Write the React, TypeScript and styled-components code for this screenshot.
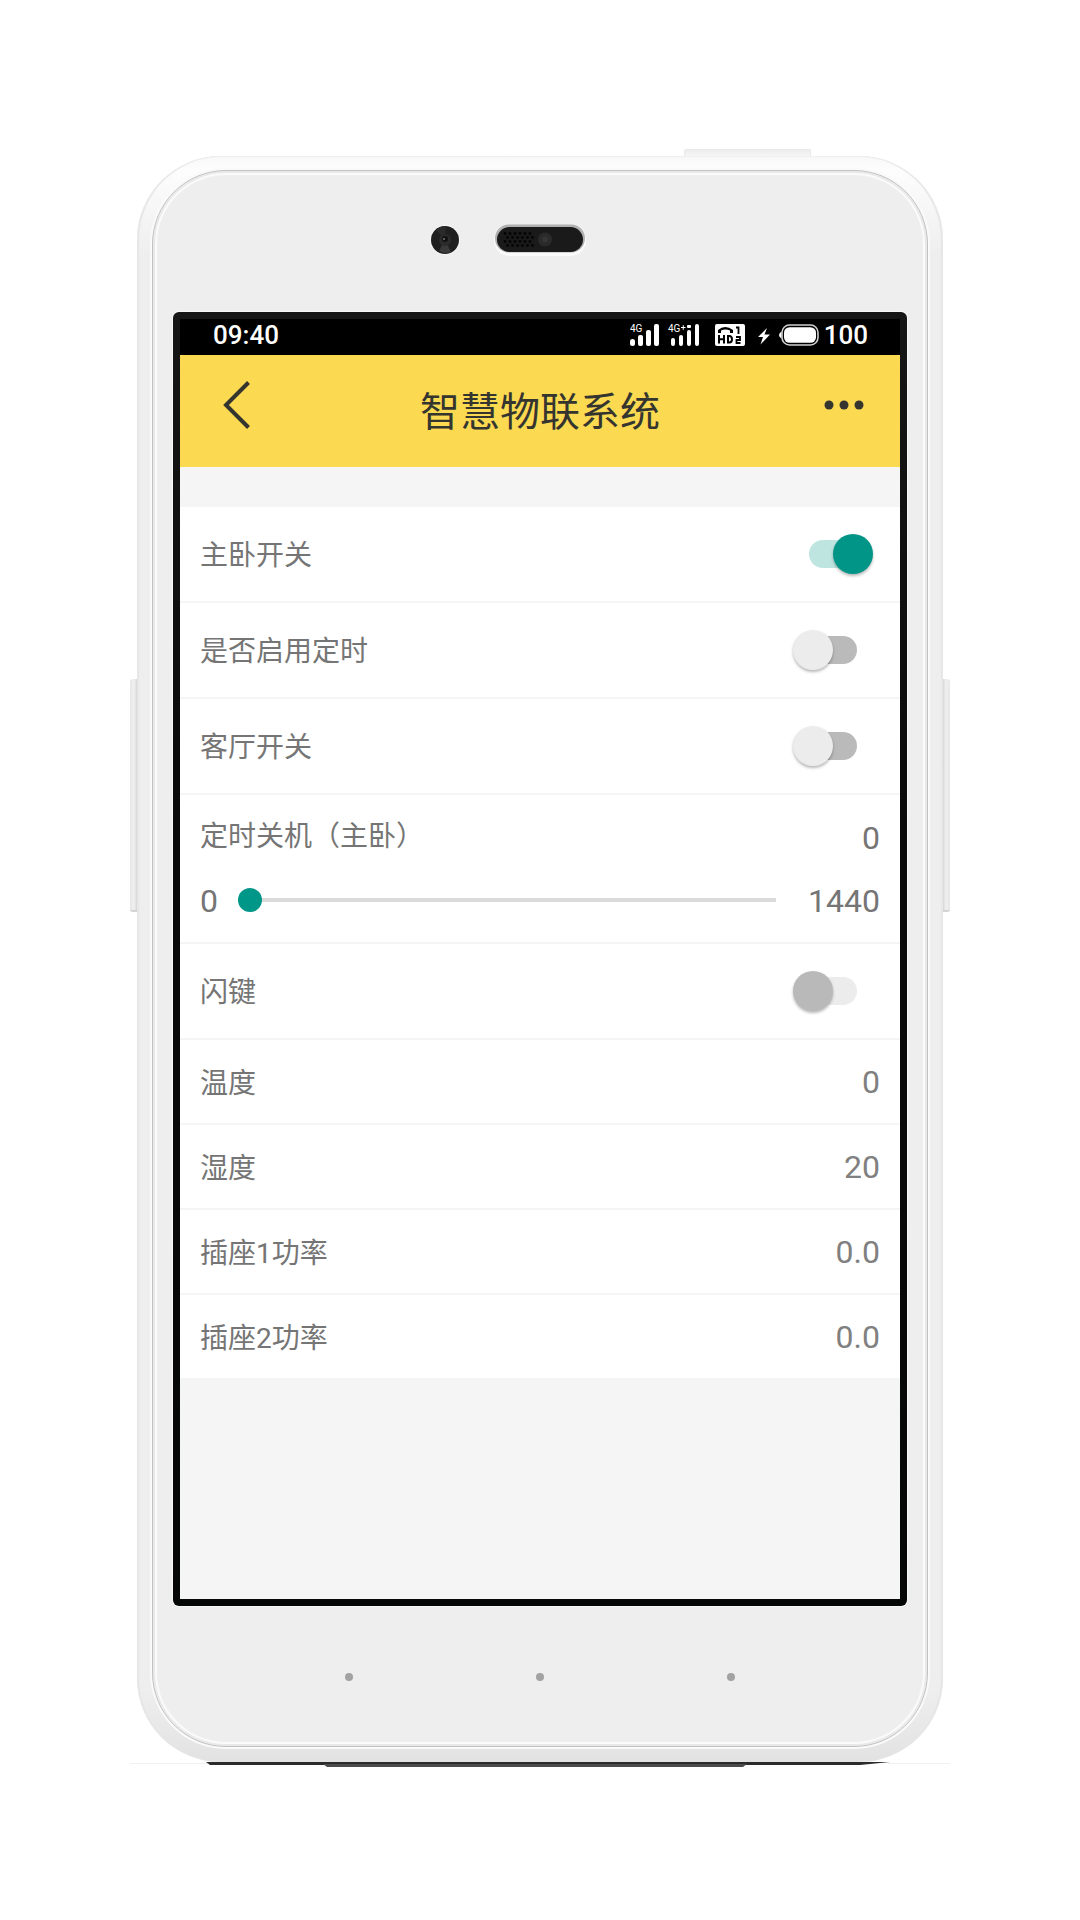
import React, { useState } from 'react';
import styled, { createGlobalStyle } from 'styled-components';

const GlobalStyle = createGlobalStyle`
  *, *::before, *::after { box-sizing: border-box; }
  body {
    margin: 0;
    background: #fff;
    font-family: Roboto, "Noto Sans CJK SC", sans-serif;
  }
`;

const Stage = styled.main`
  display: flex;
  flex-direction: column;
  padding: 149px 130px;
`;

const PowerKey = styled.div`
  align-self: flex-end;
  width: 127px;
  height: 7px;
  margin-right: 139px;
  background: linear-gradient(#ececec, #f6f6f6);
  border: 1px solid #e9e9e9;
  border-bottom: 0;
  border-radius: 2px 2px 0 0;
`;

const Device = styled.div`
  display: grid;
  grid-template-columns: 7px minmax(0, 1fr) 7px;
  align-items: start;
`;

const SideKey = styled.div<{ $side: 'left' | 'right' }>`
  height: 233px;
  margin-top: 523px;
  background: linear-gradient(
    ${(p) => (p.$side === 'left' ? 'to right' : 'to left')},
    #e6e6e6, #f0f0f0 60%, #d6d6d6
  );
  border-bottom: 2px solid #d2d2d2;
  border-radius: ${(p) => (p.$side === 'left' ? '3px 0 0 3px' : '0 3px 3px 0')};
`;

const Rim = styled.div`
  padding: 14px 15px 15px;
  border-radius: 84px;
  background: linear-gradient(#f8f8f8, #fdfdfd 14px, #eeeeee 100px, #eeeeee calc(100% - 70px), #e2e2e2);
  box-shadow: inset 2px 0 1px #e6e6e6, inset -2px 0 1px #e6e6e6, inset 0 1px 1px #f0f0f0;
`;

const Face = styled.div`
  display: flex;
  flex-direction: column;
  padding: 0 20px;
  border: 1px solid #c2c2c2;
  border-radius: 74px;
  background: #eeeeee;
  box-shadow:
    0 0 0 2px #fafafa,
    inset 0 0 0 2px #e9e9e9,
    inset 0 0 1px 4px #fbfbfb;
`;

const Sensors = styled.div`
  display: grid;
  grid-template-columns: 1fr auto 1fr;
  align-items: center;
  height: 141px;
  padding-bottom: 3px;
`;

const CameraArt = styled.svg`
  display: block;
  justify-self: end;
  margin-right: 34px;
`;

const SpeakerArt = styled.svg`
  display: block;
`;

const Bezel = styled.div`
  padding: 7px;
  border-radius: 6px;
  background: linear-gradient(#161616, #0a0a0a 40%, #050706);
  box-shadow: 0 0 0 1px #f8f8f8;
`;

const Screen = styled.section`
  aspect-ratio: 9 / 16;
  background: #f5f5f5;
`;

const StatusBar = styled.div`
  display: flex;
  align-items: center;
  justify-content: space-between;
  height: 36px;
  padding: 0 32px 4px 33px;
  background: #000;
  color: #fff;
  font-size: 26px;
  font-weight: 500;
  line-height: 32px;
`;

const StatusGroup = styled.div`
  display: flex;
  align-items: center;
  gap: 4px;
`;

const Header = styled.header`
  display: grid;
  grid-template-columns: 1fr auto 1fr;
  height: 112px;
  padding: 0 28px;
  background: #fbd951;
  color: #353530;
`;

const HeaderButton = styled.button<{ $end?: boolean }>`
  display: flex;
  align-items: center;
  justify-content: center;
  justify-self: ${(p) => (p.$end ? 'end' : 'start')};
  width: 56px;
  height: 100px;
  padding: 0;
  border: 0;
  background: none;
  color: inherit;
  cursor: pointer;
`;

const Title = styled.h1`
  align-self: center;
  margin: 0;
  padding-top: 4px;
  font-size: 40px;
  font-weight: 400;
  line-height: 56px;
`;

const List = styled.div`
  margin-top: 40px;
  background: #fff;
  color: #757575;
`;

const Row = styled.div<{ $tall?: boolean }>`
  display: flex;
  align-items: center;
  justify-content: space-between;
  min-height: ${(p) => (p.$tall ? 96 : 85)}px;
  padding: 0 20px;
  border-bottom: 2px solid #f5f5f5;
`;

const Label = styled.label`
  padding-top: 4px;
  font-size: 28px;
  line-height: 36px;
`;

const Name = styled.span`
  padding-top: 4px;
  font-size: 28px;
  line-height: 36px;
`;

const Value = styled.output<{ $muted?: boolean }>`
  color: ${(p) => (p.$muted ? '#808080' : 'inherit')};
  font-size: 32px;
  line-height: 46px;
`;

const Switch = styled.input<{ $momentary?: boolean }>`
  appearance: none;
  display: grid;
  align-items: center;
  justify-items: center;
  width: 80px;
  height: 40px;
  margin: 0 7px 0 0;
  cursor: pointer;

  &::before, &::after {
    content: "";
    grid-area: 1 / 1;
  }
  &::before {
    width: 48px;
    height: 28px;
    border-radius: 14px;
    background: ${(p) => (p.$momentary ? '#ececec' : '#bababa')};
  }
  &::after {
    justify-self: start;
    width: 40px;
    height: 40px;
    border-radius: 50%;
    background: ${(p) => (p.$momentary ? '#b9b9b9' : '#ececec')};
    box-shadow: 0 2px 3px rgba(0, 0, 0, 0.28);
  }
  &:checked::before { background: #bfe5e1; }
  &:checked::after { justify-self: end; background: #009587; }
`;

const SliderBlock = styled.div`
  display: flex;
  flex-direction: column;
  gap: 17px;
  padding: 20px 20px 18px;
  border-bottom: 2px solid #f5f5f5;
`;

const SliderHead = styled.div`
  display: flex;
  align-items: flex-start;
  justify-content: space-between;
`;

const SliderLine = styled.div`
  display: flex;
  align-items: center;
  gap: 20px;
`;

const Limit = styled.span`
  font-size: 32px;
  line-height: 46px;
`;

const Range = styled.input`
  appearance: none;
  flex: 1;
  min-width: 0;
  height: 24px;
  margin: 0 12px 2px 0;
  background: linear-gradient(#dadada, #dadada) center / 100% 4px no-repeat;
  cursor: pointer;

  &::-webkit-slider-thumb {
    appearance: none;
    width: 24px;
    height: 24px;
    border: 0;
    border-radius: 50%;
    background: #009688;
  }
`;

const Chin = styled.div`
  display: flex;
  align-items: center;
  justify-content: center;
  gap: 183px;
  height: 140px;
  padding-top: 2px;
`;

const TouchKey = styled.span`
  width: 8px;
  height: 8px;
  border-radius: 50%;
  background: #a2a2a2;
`;

const GroundShadow = styled.svg`
  display: block;
  width: 100%;
  height: 6px;
`;

const Camera = () => (
  <CameraArt width="30" height="30" viewBox="0 0 30 30" aria-hidden="true">
    <circle cx="15" cy="15" r="15" fill="#f7f7f7" />
    <circle cx="15" cy="15" r="14" fill="#1f1f1f" />
    <path d="M15 15 9 26a14 14 0 0 0 12 1z" fill="#3a3a3a" />
    <path d="M15 15 6 5a14 14 0 0 1 10-4z" fill="#2a2a2a" />
    <circle cx="15" cy="15" r="6" fill="#2b2b2b" />
    <circle cx="15" cy="14" r="3" fill="#111" />
    <circle cx="14" cy="14" r="1" fill="#777" />
  </CameraArt>
);

const Speaker = () => (
  <SpeakerArt width="92" height="32" viewBox="0 0 92 32" aria-hidden="true">
    <rect x="0" y="1" width="92" height="31" rx="15.5" fill="#fafafa" />
    <rect x="1" y="0.5" width="90" height="28" rx="14" fill="#b0b0b0" />
    <rect x="3" y="3" width="86" height="25" rx="12.5" fill="#1a1a1a" />
    {[8, 12, 16, 20].map((y, row) =>
      [0, 1, 2, 3, 4, 5].map((i) => (
        <circle key={`${y}-${i}`} cx={11 + i * 5 + (row % 2) * 2.5} cy={y + 1.5} r="1.4" fill="#050505" />
      )),
    )}
    <circle cx="51" cy="15.5" r="7" fill="#2a2a2a" />
    <circle cx="51" cy="15.5" r="3" fill="#353535" />
  </SpeakerArt>
);

const StatusIcons = () => (
  <svg width="190" height="22" viewBox="0 0 190 22" fill="#fff" role="img" aria-label="4G 4G+ HD 100%">
    <text x="0" y="8" fontSize="10" fontWeight="400">4G</text>
    <rect x="0" y="15" width="5" height="7" rx="2.5" />
    <rect x="8" y="11" width="5" height="11" rx="2" />
    <rect x="16" y="6" width="5" height="16" rx="2" />
    <rect x="24" y="0" width="5" height="22" rx="2" />

    <text x="38" y="8" fontSize="10" fontWeight="400">4G</text>
    <path d="M51 3.500h4.500M53.250 1.200v4.600" stroke="#fff" strokeWidth="1" />
    <rect x="41" y="14" width="4" height="8" rx="2" />
    <rect x="49" y="11" width="4" height="11" rx="2" />
    <rect x="57" y="1" width="4" height="3" rx="1" />
    <rect x="57" y="6" width="4" height="16" rx="2" />
    <rect x="65" y="0" width="4" height="22" rx="2" />

    <rect x="85" y="0" width="30" height="22" rx="2" />
    <path d="M88 9V6q7-6 15 0v3h-3V6.500q-4.500-2.200-9 0V9z" fill="#000" />
    <path d="M89 11v8.500M94 11v8.500M89 15.200h5M98 12v6.500h1.200q2.800 0 2.800-3.200t-2.800-3.300z" fill="none" stroke="#000" strokeWidth="2" />
    <path d="M106 3.500h2.500V10M106 13h4v3h-3.500v3h4" fill="none" stroke="#000" strokeWidth="1.800" />

    <path d="M137 4 128 13h5l-2.500 7.500L140 10.500h-5.500z" />

    <path d="M151.500 7.500Q149 9 149 11t2.500 3.500z" />
    <rect x="152" y="1" width="36" height="20" rx="7.500" fill="none" stroke="#cfcfcf" strokeWidth="1.600" />
    <rect x="154" y="3.200" width="32" height="15.600" rx="5.500" />
  </svg>
);

interface SwitchRowProps {
  id: string;
  name: string;
  initial?: boolean;
  momentary?: boolean;
}

const SwitchRow = ({ id, name, initial = false, momentary }: SwitchRowProps) => {
  const [on, setOn] = useState(initial);
  return (
    <Row $tall>
      <Label htmlFor={id}>{name}</Label>
      <Switch
        id={id}
        type="checkbox"
        role="switch"
        checked={on}
        $momentary={momentary}
        onChange={(e) => setOn(e.target.checked)}
      />
    </Row>
  );
};

const readings = [
  { name: '温度', value: '0' },
  { name: '湿度', value: '20' },
  { name: '插座1功率', value: '0.0' },
  { name: '插座2功率', value: '0.0' },
];

export default function App() {
  const [minutes, setMinutes] = useState(0);

  return (
    <>
      <GlobalStyle />
      <Stage lang="zh-CN">
        <PowerKey />
        <Device>
          <SideKey $side="left" />
          <Rim>
            <Face>
              <Sensors>
                <Camera />
                <Speaker />
              </Sensors>
              <Bezel>
                <Screen>
                  <StatusBar>
                    <time>09:40</time>
                    <StatusGroup>
                      <StatusIcons />
                      <span>100</span>
                    </StatusGroup>
                  </StatusBar>
                  <Header>
                    <HeaderButton type="button" aria-label="返回">
                      <svg width="28" height="48" viewBox="0 0 28 48" fill="none" stroke="currentColor" strokeWidth="4">
                        <path d="M26.500 1.500 4 24l22.500 22.500" />
                      </svg>
                    </HeaderButton>
                    <Title>智慧物联系统</Title>
                    <HeaderButton type="button" $end aria-label="更多">
                      <svg width="40" height="10" viewBox="0 0 40 10" fill="currentColor">
                        <circle cx="5" cy="5" r="4.500" />
                        <circle cx="20" cy="5" r="4.500" />
                        <circle cx="35" cy="5" r="4.500" />
                      </svg>
                    </HeaderButton>
                  </Header>
                  <List>
                    <SwitchRow id="bedroom" name="主卧开关" initial />
                    <SwitchRow id="timer" name="是否启用定时" />
                    <SwitchRow id="living" name="客厅开关" />
                    <SliderBlock>
                      <SliderHead>
                        <Label htmlFor="off-timer">定时关机（主卧）</Label>
                        <Value htmlFor="off-timer">{minutes}</Value>
                      </SliderHead>
                      <SliderLine>
                        <Limit>0</Limit>
                        <Range
                          id="off-timer"
                          type="range"
                          min={0}
                          max={1440}
                          value={minutes}
                          onChange={(e) => setMinutes(Number(e.target.value))}
                        />
                        <Limit>1440</Limit>
                      </SliderLine>
                    </SliderBlock>
                    <SwitchRow id="flash" name="闪键" momentary />
                    {readings.map((r) => (
                      <Row key={r.name}>
                        <Name>{r.name}</Name>
                        <Value $muted>{r.value}</Value>
                      </Row>
                    ))}
                  </List>
                </Screen>
              </Bezel>
              <Chin>
                <TouchKey />
                <TouchKey />
                <TouchKey />
              </Chin>
            </Face>
          </Rim>
          <SideKey $side="right" />
        </Device>
        <GroundShadow viewBox="0 0 820 6" preserveAspectRatio="none" aria-hidden="true">
          <path d="M0 1h78v1H0zM758 1h62v1h-62z" fill="#f0f0f0" />
          <path d="M76 0h684l-30 3H80z" fill="#2b2b2b" />
          <path d="M193 2h424l-4 3H197z" fill="#4a4a4a" />
        </GroundShadow>
      </Stage>
    </>
  );
}
